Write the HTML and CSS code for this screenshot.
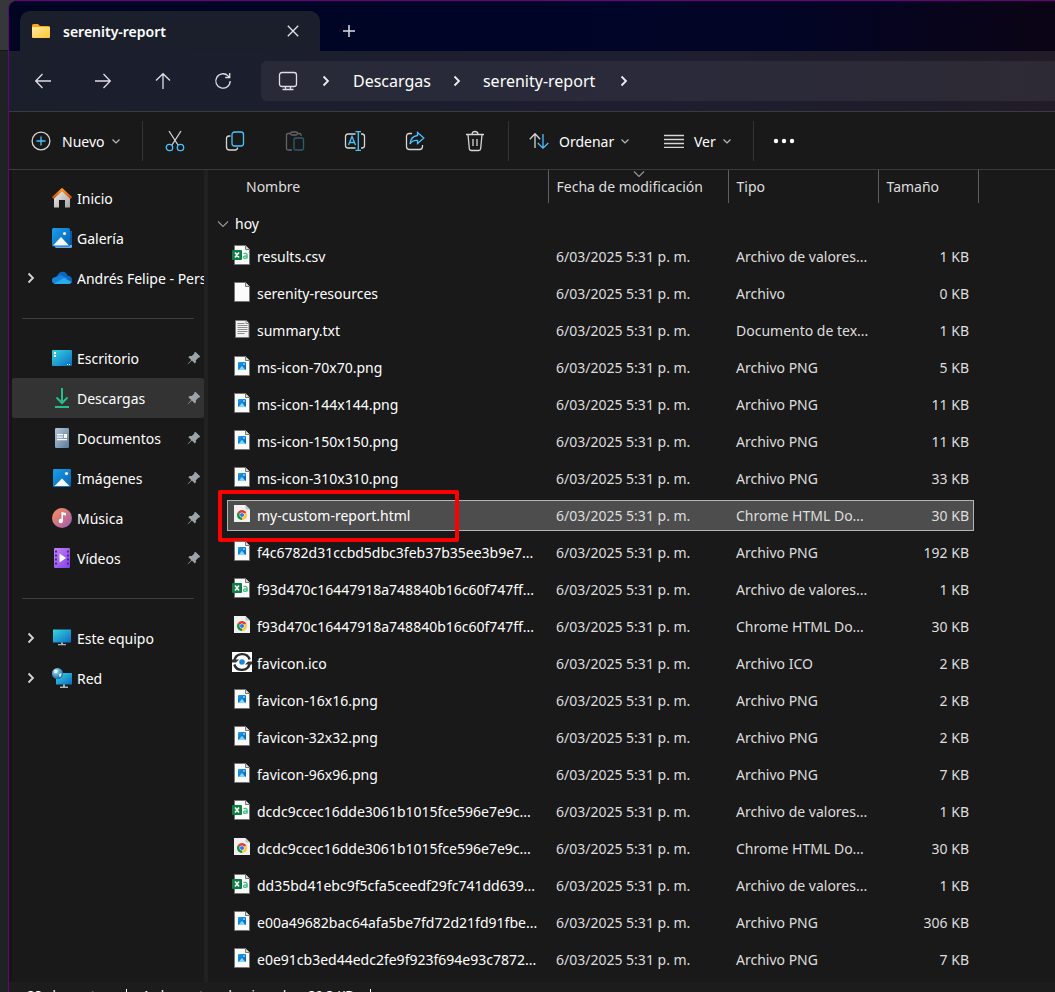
FILE: index.html
```html
<!DOCTYPE html>
<html lang="es">
<head>
<meta charset="utf-8">
<title>serenity-report</title>
<link rel="stylesheet" href="styles.css">
</head>
<body>
<svg class="defs" aria-hidden="true">
  <defs>
    <linearGradient id="gFolder" x1="0" y1="0" x2="1" y2="1"><stop offset="0" stop-color="#ffe9a6"/><stop offset="1" stop-color="#fec62f"/></linearGradient>
    <linearGradient id="gBlue" x1="0" y1="0" x2="1" y2="1"><stop offset="0" stop-color="#1ba0ea"/><stop offset="1" stop-color="#0560b5"/></linearGradient>
    <linearGradient id="gTeal" x1="0" y1="0" x2="1" y2="1"><stop offset="0" stop-color="#37d6e0"/><stop offset="1" stop-color="#0b6cc4"/></linearGradient>
    <linearGradient id="gHouse" x1="0" y1="0" x2="1" y2="1"><stop offset="0" stop-color="#eeeeee"/><stop offset="1" stop-color="#a5a5a5"/></linearGradient>
    <linearGradient id="gRoof" x1="0" y1="0" x2="0" y2="1"><stop offset="0" stop-color="#ff9a1c"/><stop offset="1" stop-color="#d04a10"/></linearGradient>
    <linearGradient id="gDoc" x1="0" y1="0" x2="1" y2="1"><stop offset="0" stop-color="#b5c8da"/><stop offset="1" stop-color="#5b7c9c"/></linearGradient>
    <linearGradient id="gMusic" x1="0" y1="0" x2="1" y2="1"><stop offset="0" stop-color="#ff9252"/><stop offset="1" stop-color="#9a5aba"/></linearGradient>
    <linearGradient id="gVideo" x1="0" y1="0" x2="1" y2="1"><stop offset="0" stop-color="#c184fb"/><stop offset="1" stop-color="#8440e2"/></linearGradient>
    <radialGradient id="gGlobe" cx=".35" cy=".3" r=".8"><stop offset="0" stop-color="#c5e8f8"/><stop offset=".5" stop-color="#4b9fce"/><stop offset="1" stop-color="#155a8d"/></radialGradient>
  </defs>
  <symbol id="chev-r" viewBox="0 0 10 12"><path d="M2.5 1.5 7 6l-4.500 4.500" fill="none" stroke="currentColor" stroke-width="1.800"/></symbol>
  <symbol id="chev-d" viewBox="0 0 10 10"><path d="M1.500 3.500 5 7l3.500-3.500" fill="none" stroke="currentColor" stroke-width="1.200"/></symbol>
  <symbol id="chev-w" viewBox="0 0 12 8"><path d="M1 1.500 6 6.500l5-5" fill="none" stroke="currentColor" stroke-width="1.100"/></symbol>
  <symbol id="pin" viewBox="0 0 14 14"><path d="M8.300.7 13.300 5.500 12.200 6.600 11.300 6.700 8.900 9.300 8.900 11.300 7.800 12.400 4.900 9.600 1.200 13.100.4 13.600.9 12.700 4.200 9 1.400 6.200 2.500 5.100 4.700 5.100 7.200 2.700 7.200 1.700Z" fill="#9aa4ab"/></symbol>
  <symbol id="f-blank" viewBox="0 0 20 20"><path d="M2.500.5h11l4 4v15h-15z" fill="#fbfbfb" stroke="#757575"/><path d="M13.500.5v4h4" fill="#ddd" stroke="#757575"/></symbol>
  <symbol id="f-png" viewBox="0 0 20 20"><use href="#f-blank"/><rect x="6" y="6" width="8" height="8" rx="1" fill="url(#gBlue)"/><path d="M6.500 14 10 9.800 13.500 14z" fill="#7ed4fb"/><circle cx="12" cy="8" r=".8" fill="#fff"/></symbol>
  <symbol id="f-csv" viewBox="0 0 20 20"><use href="#f-blank"/><rect x="0" y="5" width="10" height="10" rx="1" fill="#107c41"/><path d="M3 7.500 7 12.500M7 7.500 3 12.500" stroke="#fff" stroke-width="1.600"/><path d="M11.500 8.800c1-.8 3.600-.8 3.600 1.200v3.500M15 11c-1.500-.1-3.500.1-3.500 1.300 0 1.500 2.600 1.400 3.500-.2" fill="none" stroke="#33c481" stroke-width="1.300"/></symbol>
  <symbol id="f-txt" viewBox="0 0 20 20"><path d="M3.500 1.500h10.500l3 3v14h-13.500z" fill="#f2f2f2" stroke="#777"/><path d="M14 1.500v3h3" fill="#fff" stroke="#888"/><path d="M5.500 4.500h7M5.500 6.500h10M5.500 8.500h10M5.500 10.500h10M5.500 12.500h10M5.500 14.500h7" stroke="#8d8d8d"/></symbol>
  <symbol id="f-html" viewBox="0 0 20 20"><path d="M2 1h11.500l4.500 4.500v12.500h-16z" fill="#f1f1f1"/><path d="M13.500 1v4.500h4.500z" fill="#c6c6c6"/><path d="M10 11 5.670 8.500A5 5 0 0 1 14.330 8.500Z" fill="#e33b2e"/><path d="M10 11 14.330 8.500A5 5 0 0 1 10 16Z" fill="#fcc934"/><path d="M10 11 10 16A5 5 0 0 1 5.670 8.500Z" fill="#1e8e3e"/><circle cx="10" cy="11" r="2.500" fill="#fff"/><circle cx="10" cy="11" r="2.100" fill="#3278e8"/></symbol>
  <symbol id="f-ico" viewBox="0 0 20 20"><path d="M0 0h20v20H0z" fill="#fff"/><path d="M2.300 8.500A8 8 0 0 1 17.700 7.500M2.300 12.500A8 8 0 0 0 17.700 11.500" fill="none" stroke="#2b2b2b" stroke-width="2.400"/><path d="M0 7.500h7L4 10.500H0zM20 12.500h-7l3-3h4z" fill="#333"/><circle cx="10" cy="10" r="2.800" fill="#1686df"/></symbol>
</svg>

<div class="window">
  <header class="titlebar">
    <div class="tab">
      <svg width="20" height="16" viewBox="0 0 20 16"><path d="M1 2.500Q1 1 2.500 1H7l2 2h8.500Q19 3 19 4.500V13H1z" fill="#f5a915"/><rect x="1" y="4" width="18" height="11" rx="1" fill="url(#gFolder)"/></svg>
      <span class="tab-title">serenity-report</span>
      <button class="icon-btn close" aria-label="Cerrar pestaña"><svg width="12" height="12" viewBox="0 0 12 12"><path d="M.8.800 11.200 11.200M11.200.800.8 11.200" stroke="#e6e6e9" stroke-width="1.300"/></svg></button>
    </div>
    <button class="icon-btn add" aria-label="Nueva pestaña"><svg width="14" height="14" viewBox="0 0 14 14"><path d="M7 1v12M1 7h12" stroke="#dcdce4" stroke-width="1.500"/></svg></button>
  </header>

  <nav class="navbar" aria-label="Navegación">
    <button class="icon-btn" aria-label="Atrás"><svg width="18" height="18" viewBox="0 0 18 18"><path d="M17 9H2M8.500 2 1.700 9l6.800 7"/></svg></button>
    <button class="icon-btn" aria-label="Adelante"><svg width="18" height="18" viewBox="0 0 18 18"><path d="M1 9h15M9.500 2 16.300 9l-6.800 7"/></svg></button>
    <button class="icon-btn" aria-label="Subir"><svg width="18" height="18" viewBox="0 0 18 18"><path d="M9 17V2M2 8.500 9 1.700l7 6.800"/></svg></button>
    <button class="icon-btn" aria-label="Actualizar"><svg width="18" height="18" viewBox="0 0 18 18"><path d="M16.200 9A7.200 7.200 0 1 1 14.100 3.900L15.500 5.200M15.700 1v4.500h-4.500"/></svg></button>
    <div class="address">
      <svg class="pc" width="20" height="20" viewBox="0 0 20 20"><rect x="1.500" y="1.500" width="17" height="14" rx="2.500"/><path d="M7.500 16v2.500M12.500 16v2.500M4.500 18.500h11"/></svg>
      <svg class="sep" width="10" height="12"><use href="#chev-r"/></svg>
      <a href="#descargas">Descargas</a>
      <svg class="sep" width="10" height="12"><use href="#chev-r"/></svg>
      <a href="#serenity-report">serenity-report</a>
      <svg class="sep last" width="10" height="12"><use href="#chev-r"/></svg>
    </div>
  </nav>

  <div class="toolbar" role="toolbar">
    <button class="cmd new"><svg width="20" height="20" viewBox="0 0 20 20"><circle cx="10" cy="10" r="8.900"/><path class="b" d="M10 5.500v9M5.500 10h9"/></svg><span>Nuevo</span><svg class="dd" width="10" height="10"><use href="#chev-d"/></svg></button>
    <div class="icons">
      <button class="icon-btn" aria-label="Cortar"><svg width="20" height="22" viewBox="0 0 20 22"><path d="M4 1 13 15M16 1 7 15"/><circle class="b" cx="4.500" cy="17.500" r="3.200"/><circle class="b" cx="15.500" cy="17.500" r="3.200"/></svg></button>
      <button class="icon-btn" aria-label="Copiar"><svg width="20" height="20" viewBox="0 0 20 20"><path d="M5.500 5H4Q1.500 5 1.500 7.500v8.500q0 3 3 3H10q2.500 0 2.500-2.500"/><rect class="b" x="7" y="1" width="11.500" height="14" rx="2.500"/></svg></button>
      <button class="icon-btn dim" aria-label="Pegar"><svg width="20" height="20" viewBox="0 0 20 20"><path d="M5 2.500H3Q1.500 2.500 1.500 4v13.500q0 1.500 1.500 1.500h4M13 2.500h1.500Q16 2.500 16 4v1"/><rect x="5.500" y="1" width="7" height="3" rx="1.500"/><rect class="b" x="9" y="7" width="9.500" height="12" rx="1.500"/></svg></button>
      <button class="icon-btn" aria-label="Cambiar nombre"><svg width="22" height="20" viewBox="0 0 22 20"><path d="M11.500 3H4Q1.500 3 1.500 5.500v9Q1.500 17 4 17h7.500M17 3h1q2.500 0 2.500 2.500v9Q20.500 17 18 17h-1"/><path class="b" d="M4.500 14 8 5.500 11.500 14M5.700 11.500h4.600M11.500.7h5.500M14.300.7v18.600M11.500 19.300h5.500"/></svg></button>
      <button class="icon-btn" aria-label="Compartir"><svg width="20" height="20" viewBox="0 0 20 20"><path d="M7 2.500H4.500Q1.500 2.500 1.500 5.500v10q0 3 3 3h10q3 0 3-3V14"/><path class="b" d="M12.500 1.500 18.800 7l-6.300 5.500V9.500Q7.500 9 5 13 5.500 5.500 12.500 4.500z"/></svg></button>
      <button class="icon-btn" aria-label="Eliminar"><svg width="20" height="22" viewBox="0 0 20 22"><path d="M1 4.500h18M7 4.500Q7 1.500 10 1.500t3 3M3 4.500 4.300 18.500Q4.500 20.500 6.500 20.500h7q2 0 2.200-2L17 4.500M8 9v7M12 9v7"/></svg></button>
    </div>
    <button class="cmd sort"><svg width="20" height="18" viewBox="0 0 20 18"><path d="M6 16V2M.8 7.200 6 1.800l5.200 5.400"/><path class="b" d="M14 2v14M8.800 11 14 16.200 19.300 11"/></svg><span>Ordenar</span><svg class="dd" width="10" height="10"><use href="#chev-d"/></svg></button>
    <button class="cmd view"><svg width="20" height="14" viewBox="0 0 20 14"><path d="M0 1.500h20M0 5.500h20M0 9.500h20M0 13.500h20"/></svg><span>Ver</span><svg class="dd" width="10" height="10"><use href="#chev-d"/></svg></button>
    <button class="icon-btn more" aria-label="Más opciones"><svg width="22" height="6" viewBox="0 0 22 6"><g fill="#fff" stroke="none"><circle cx="3" cy="3" r="2.200"/><circle cx="11" cy="3" r="2.200"/><circle cx="19" cy="3" r="2.200"/></g></svg></button>
  </div>

  <div class="content">
    <aside class="sidebar">
      <a class="item" href="#inicio"><svg class="ic" viewBox="0 0 20 20"><path d="M2 9.500 10 2l8 7.500v10h-5V12H7v7.500H2z" fill="url(#gHouse)"/><path d="M.8 10 10 1.500 19.200 10" fill="none" stroke="url(#gRoof)" stroke-width="2.500"/></svg><span>Inicio</span></a>
      <a class="item" href="#galeria"><svg class="ic" viewBox="0 0 20 20"><rect x="3" y="3" width="17" height="17" rx="1.500" fill="#6eaae2"/><path d="M18 3h2v14h-2z" fill="#0a58a4"/><rect width="18" height="18.500" rx="1.500" fill="url(#gBlue)"/><path d="M1 17.500 9 9l8 8.500z" fill="#f4faff"/><circle cx="12.500" cy="5.500" r="1.500" fill="#fff"/></svg><span>Galería</span></a>
      <a class="item" href="#andres"><svg class="exp" width="10" height="12"><use href="#chev-r"/></svg><svg class="ic" viewBox="0 0 20 20"><path d="M4.500 9Q7 3.300 11 3.800q3.500.3 4.700 4Q20 8 20 12q0 4-4 4H4.500Q0 16 0 12.200 0 9.500 4.500 9" fill="#0a66c2"/><path d="M4.500 8.800Q0 9.500 0 12.200 0 16 4.500 16L16 10.500 8.500 7z" fill="#1585d8"/><path d="M2 15.500 12 10l7.800 4Q19 16 16 16H4.500Q3 16 2 15.500" fill="#2aa9ef"/></svg><span>Andrés Felipe - Personal</span></a>
      <hr>
      <a class="item" href="#escritorio"><svg class="ic" viewBox="0 0 20 20"><rect y="2" width="20" height="16" rx="1" fill="url(#gTeal)"/><path d="M2 4h2v2H2zM2 7h2v2H2zM15 16h1v1h-1zM17 16h1v1h-1z" fill="#fff"/></svg><span>Escritorio</span><svg class="pin"><use href="#pin"/></svg></a>
      <a class="item active" href="#descargas"><svg class="ic" viewBox="0 0 20 20"><path d="M10 0v15M4.500 9.500 10 15l5.500-5.500M3 19h14" fill="none" stroke="#27bd88" stroke-width="2"/></svg><span>Descargas</span><svg class="pin"><use href="#pin"/></svg></a>
      <a class="item" href="#documentos"><svg class="ic" viewBox="0 0 20 20"><rect x="3" width="14" height="20" rx="1.200" fill="url(#gDoc)"/><path d="M5 6.700h6M5 9.200h6M5 11.700h10" stroke="#fff" stroke-width="1.300"/><path d="M12 6h3v4h-3z" fill="#fff"/></svg><span>Documentos</span><svg class="pin"><use href="#pin"/></svg></a>
      <a class="item" href="#imagenes"><svg class="ic" viewBox="0 0 20 20"><rect x="1" y="1" width="18" height="18" rx="1.200" fill="url(#gBlue)"/><path d="M2.500 18 10 10.500l7.500 7.500z" fill="#f4faff"/><circle cx="14.500" cy="5.500" r="1.600" fill="#fff"/></svg><span>Imágenes</span><svg class="pin"><use href="#pin"/></svg></a>
      <a class="item" href="#musica"><svg class="ic" viewBox="0 0 20 20"><circle cx="10" cy="10" r="10" fill="url(#gMusic)"/><path d="M9.500 4 14 5v2.500l-3-.5v6" fill="#fff"/><path d="M10.200 4.500V13" stroke="#fff" stroke-width="1.500"/><circle cx="8.800" cy="13" r="2.200" fill="#fff"/></svg><span>Música</span><svg class="pin"><use href="#pin"/></svg></a>
      <a class="item" href="#videos"><svg class="ic" viewBox="0 0 20 20"><rect x="2" width="16" height="20" rx="1.200" fill="url(#gVideo)"/><path d="M4 2.500v16M16 2.500v16" stroke="#4a2390" stroke-width="2" stroke-dasharray="2 2"/><path d="M7.500 5.500 14 10l-6.500 4.500z" fill="#fff"/></svg><span>Vídeos</span><svg class="pin"><use href="#pin"/></svg></a>
      <hr>
      <a class="item" href="#equipo"><svg class="exp" width="10" height="12"><use href="#chev-r"/></svg><svg class="ic" viewBox="0 0 20 20"><rect x="1" y="1.500" width="18" height="13" fill="url(#gTeal)"/><path d="M9 14.500h2V16h3v1.300H6V16h3z" fill="#a9b4bc"/></svg><span>Este equipo</span></a>
      <a class="item" href="#red"><svg class="exp" width="10" height="12"><use href="#chev-r"/></svg><svg class="ic" viewBox="0 0 20 20"><rect x="4" y="5" width="16" height="11.500" fill="url(#gTeal)"/><path d="M11 16.500h2V18.500h3V20H8v-1.500h3z" fill="#a9b4bc"/><circle cx="5.500" cy="5.500" r="5.500" fill="url(#gGlobe)"/><path d="M3 1.500 6 2.500 4.500 5 2 5zM7 6l2.500-1L9 8.500 7.500 9z" fill="#e2f4fc"/></svg><span>Red</span></a>
    </aside>

    <main class="files">
      <table>
        <colgroup><col class="c-name"><col class="c-date"><col class="c-type"><col class="c-size"><col></colgroup>
        <thead>
          <tr><th class="name">Nombre</th><th><svg class="sorted" width="12" height="8"><use href="#chev-w"/></svg>Fecha de modificación</th><th>Tipo</th><th>Tamaño</th><th></th></tr>
        </thead>
        <tbody>
          <tr class="group"><td colspan="5"><div><svg width="12" height="8"><use href="#chev-w"/></svg>hoy</div></td></tr>
          <tr><td><div class="cell"><svg class="fi"><use href="#f-csv"/></svg>results.csv</div></td><td><div class="cell">6/03/2025 5:31 p. m.</div></td><td><div class="cell">Archivo de valores...</div></td><td><div class="cell">1 KB</div></td></tr>
          <tr><td><div class="cell"><svg class="fi"><use href="#f-blank"/></svg>serenity-resources</div></td><td><div class="cell">6/03/2025 5:31 p. m.</div></td><td><div class="cell">Archivo</div></td><td><div class="cell">0 KB</div></td></tr>
          <tr><td><div class="cell"><svg class="fi"><use href="#f-txt"/></svg>summary.txt</div></td><td><div class="cell">6/03/2025 5:31 p. m.</div></td><td><div class="cell">Documento de tex...</div></td><td><div class="cell">1 KB</div></td></tr>
          <tr><td><div class="cell"><svg class="fi"><use href="#f-png"/></svg>ms-icon-70x70.png</div></td><td><div class="cell">6/03/2025 5:31 p. m.</div></td><td><div class="cell">Archivo PNG</div></td><td><div class="cell">5 KB</div></td></tr>
          <tr><td><div class="cell"><svg class="fi"><use href="#f-png"/></svg>ms-icon-144x144.png</div></td><td><div class="cell">6/03/2025 5:31 p. m.</div></td><td><div class="cell">Archivo PNG</div></td><td><div class="cell">11 KB</div></td></tr>
          <tr><td><div class="cell"><svg class="fi"><use href="#f-png"/></svg>ms-icon-150x150.png</div></td><td><div class="cell">6/03/2025 5:31 p. m.</div></td><td><div class="cell">Archivo PNG</div></td><td><div class="cell">11 KB</div></td></tr>
          <tr><td><div class="cell"><svg class="fi"><use href="#f-png"/></svg>ms-icon-310x310.png</div></td><td><div class="cell">6/03/2025 5:31 p. m.</div></td><td><div class="cell">Archivo PNG</div></td><td><div class="cell">33 KB</div></td></tr>
          <tr class="selected"><td><div class="cell"><svg class="fi"><use href="#f-html"/></svg>my-custom-report.html<span class="highlight"></span></div></td><td><div class="cell">6/03/2025 5:31 p. m.</div></td><td><div class="cell">Chrome HTML Do...</div></td><td><div class="cell">30 KB</div></td></tr>
          <tr><td><div class="cell"><svg class="fi"><use href="#f-png"/></svg>f4c6782d31ccbd5dbc3feb37b35ee3b9e7...</div></td><td><div class="cell">6/03/2025 5:31 p. m.</div></td><td><div class="cell">Archivo PNG</div></td><td><div class="cell">192 KB</div></td></tr>
          <tr><td><div class="cell"><svg class="fi"><use href="#f-csv"/></svg>f93d470c16447918a748840b16c60f747ff...</div></td><td><div class="cell">6/03/2025 5:31 p. m.</div></td><td><div class="cell">Archivo de valores...</div></td><td><div class="cell">1 KB</div></td></tr>
          <tr><td><div class="cell"><svg class="fi"><use href="#f-html"/></svg>f93d470c16447918a748840b16c60f747ff...</div></td><td><div class="cell">6/03/2025 5:31 p. m.</div></td><td><div class="cell">Chrome HTML Do...</div></td><td><div class="cell">30 KB</div></td></tr>
          <tr><td><div class="cell"><svg class="fi"><use href="#f-ico"/></svg>favicon.ico</div></td><td><div class="cell">6/03/2025 5:31 p. m.</div></td><td><div class="cell">Archivo ICO</div></td><td><div class="cell">2 KB</div></td></tr>
          <tr><td><div class="cell"><svg class="fi"><use href="#f-png"/></svg>favicon-16x16.png</div></td><td><div class="cell">6/03/2025 5:31 p. m.</div></td><td><div class="cell">Archivo PNG</div></td><td><div class="cell">2 KB</div></td></tr>
          <tr><td><div class="cell"><svg class="fi"><use href="#f-png"/></svg>favicon-32x32.png</div></td><td><div class="cell">6/03/2025 5:31 p. m.</div></td><td><div class="cell">Archivo PNG</div></td><td><div class="cell">2 KB</div></td></tr>
          <tr><td><div class="cell"><svg class="fi"><use href="#f-png"/></svg>favicon-96x96.png</div></td><td><div class="cell">6/03/2025 5:31 p. m.</div></td><td><div class="cell">Archivo PNG</div></td><td><div class="cell">7 KB</div></td></tr>
          <tr><td><div class="cell"><svg class="fi"><use href="#f-csv"/></svg>dcdc9ccec16dde3061b1015fce596e7e9c...</div></td><td><div class="cell">6/03/2025 5:31 p. m.</div></td><td><div class="cell">Archivo de valores...</div></td><td><div class="cell">1 KB</div></td></tr>
          <tr><td><div class="cell"><svg class="fi"><use href="#f-html"/></svg>dcdc9ccec16dde3061b1015fce596e7e9c...</div></td><td><div class="cell">6/03/2025 5:31 p. m.</div></td><td><div class="cell">Chrome HTML Do...</div></td><td><div class="cell">30 KB</div></td></tr>
          <tr><td><div class="cell"><svg class="fi"><use href="#f-csv"/></svg>dd35bd41ebc9f5cfa5ceedf29fc741dd639...</div></td><td><div class="cell">6/03/2025 5:31 p. m.</div></td><td><div class="cell">Archivo de valores...</div></td><td><div class="cell">1 KB</div></td></tr>
          <tr><td><div class="cell"><svg class="fi"><use href="#f-png"/></svg>e00a49682bac64afa5be7fd72d21fd91fbe...</div></td><td><div class="cell">6/03/2025 5:31 p. m.</div></td><td><div class="cell">Archivo PNG</div></td><td><div class="cell">306 KB</div></td></tr>
          <tr><td><div class="cell"><svg class="fi"><use href="#f-png"/></svg>e0e91cb3ed44edc2fe9f923f694e93c7872...</div></td><td><div class="cell">6/03/2025 5:31 p. m.</div></td><td><div class="cell">Archivo PNG</div></td><td><div class="cell">7 KB</div></td></tr>
        </tbody>
      </table>
    </main>
  </div>

  <footer class="status"><span>28 elementos</span><i></i><span>1 elemento seleccionado</span><span class="size">29.3 KB</span><i></i></footer>
</div>
</body>
</html>
```
FILE: styles.css
```css
* { box-sizing: border-box; }
html { height: 100%; }
body {
  height: 100%;
  margin: 0;
  padding-left: 8px;
  overflow: hidden;
  background: linear-gradient(#36373a 50px, #151618 50px, #151618 51px, #202124 51px);
  color: #fff;
  font: 14px/20px "Noto Sans", "Open Sans", sans-serif;
}
.defs { position: absolute; width: 0; height: 0; }
a { color: inherit; text-decoration: none; }
button { border: 0; padding: 0; background: none; color: inherit; font: inherit; }
svg { display: block; flex: none; }

.window {
  min-height: 100%;
  border: solid #6d0080;
  border-width: 1px 0 0 1px;
  border-radius: 9px 0 0 0;
  overflow: hidden;
  background: #191919;
}
.icon-btn { display: flex; flex: none; align-items: center; justify-content: center; width: 60px; height: 40px; }

.titlebar {
  display: flex;
  align-items: flex-end;
  height: 50px;
  padding-left: 11px;
  background: linear-gradient(90deg, #000522 0%, #000528 50%, #030525 75%, #0b0415 100%);
}
.tab {
  display: flex;
  align-items: center;
  width: 300px;
  height: 40px;
  padding-left: 11px;
  border-radius: 10px 10px 0 0;
  background: #1b1f2c;
}
.tab-title { flex: 1; margin-left: 12px; padding-top: 2px; font-weight: 600; }
.close { width: 54px; }
.add { width: 58px; }

.navbar {
  display: flex;
  align-items: center;
  height: 61px;
  padding-left: 4px;
  border-bottom: 1px solid #3b3b3d;
  background: linear-gradient(90deg, #1b1f2c 0%, #1d1e30 60%, #211c27 100%);
}
.navbar svg { fill: none; stroke: #e0e0e4; stroke-width: 1.3; }
.address {
  display: flex;
  flex: 1;
  align-items: center;
  height: 40px;
  margin-left: 8px;
  padding-left: 17px;
  border-radius: 6px 0 0 6px;
  background: linear-gradient(90deg, #282a38 0%, #2a2a3a 50%, #2e2a35 100%);
  font-size: 16px;
}
.address .sep { margin: 0 21px; color: #eee; }
.address .pc + .sep { margin: 0 22px 0 23px; }
.address .last { margin-left: 24px; }

.toolbar {
  display: flex;
  align-items: center;
  height: 58px;
  padding-top: 1px;
  border-bottom: 1px solid #3b3b3b;
}
.toolbar svg { fill: none; stroke: #d6d6d6; stroke-width: 1.3; }
.toolbar .b { stroke: #4cc2ff; }
.toolbar .dd { color: #bbb; margin-left: 6px; stroke: none; }
.cmd { display: flex; align-items: center; height: 40px; }
.cmd span { margin-left: 10px; padding-top: 2px; }
.new { width: 133px; padding-left: 22px; }
.new span { margin-left: 11px; }
.icons { display: flex; padding: 0 3px 0 2px; border: solid #333; border-width: 0 1px; }
.dim { opacity: .4; }
.sort { width: 135px; padding-left: 20px; }
.view { width: 110px; padding-left: 20px; border-right: 1px solid #333; }

.content { display: flex; }
.sidebar { flex: none; width: 195px; padding-top: 8px; overflow: hidden; border-left: 3px solid #151515; }
.item {
  display: grid;
  grid-template-columns: 40px 25px minmax(0, 1fr) 17px;
  align-items: center;
  height: 40px;
  border-radius: 2px;
  white-space: nowrap;
}
.item.active { background: #333; }
.item .exp { grid-column: 1; margin-left: 14px; color: #d6d6d6; }
.item .ic { grid-column: 2; width: 20px; height: 20px; }
.item span { grid-column: 3; padding-top: 2px; overflow: hidden; }
.item .exp ~ span { grid-column: 3 / 5; }
.item .pin { width: 14px; height: 14px; }
.sidebar hr { height: 1px; margin: 20px 10px 19px; border: 0; background: #3d3d3d; }

.files { flex: 1; min-width: 0; padding-bottom: 4px; border-left: 4px solid #212121; }
table { width: 100%; table-layout: fixed; border-collapse: collapse; }
.c-name { width: 340px; }
.c-date { width: 180px; }
.c-type { width: 150px; }
.c-size { width: 100px; }
th {
  position: relative;
  height: 33px;
  padding: 0 0 0 8px;
  border-left: 1px solid #5e5e5e;
  color: #dedede;
  font-weight: 400;
  text-align: left;
}
th.name { padding-left: 38px; border-left: 0; }
.sorted { position: absolute; top: 0; left: 84px; color: #999; }
td { height: 37px; padding: 0; color: #dedede; white-space: nowrap; }
.group td { height: 35px; color: #fff; }
.group div { display: flex; align-items: center; gap: 6px; height: 35px; padding: 7px 0 0 9px; }
.group svg { color: #999; }
.cell { display: flex; align-items: center; height: 31px; padding-left: 8px; border: solid transparent; border-width: 1px 0; }
td:first-child .cell { position: relative; gap: 5px; margin-left: 19px; padding-left: 4px; border-left-width: 1px; color: #fff; }
td:nth-child(4) .cell { justify-content: flex-end; margin-right: 4px; padding-right: 4px; border-right-width: 1px; }
.fi { width: 20px; height: 20px; margin-bottom: 3px; }
.selected .cell { border-color: #b5b5b5; background: #4d4d4d; }
.highlight {
  position: absolute;
  top: -11px;
  left: -10px;
  width: 241px;
  height: 52px;
  border: 4px solid #f00;
  border-radius: 2px;
}

.status { display: flex; align-items: center; height: 26px; padding-left: 18px; background: #1c1c1c; font-size: 13px; }
.status i { width: 1px; height: 12px; margin: 0 16px; background: #fff; }
.status .size { margin-left: 14px; }
```
